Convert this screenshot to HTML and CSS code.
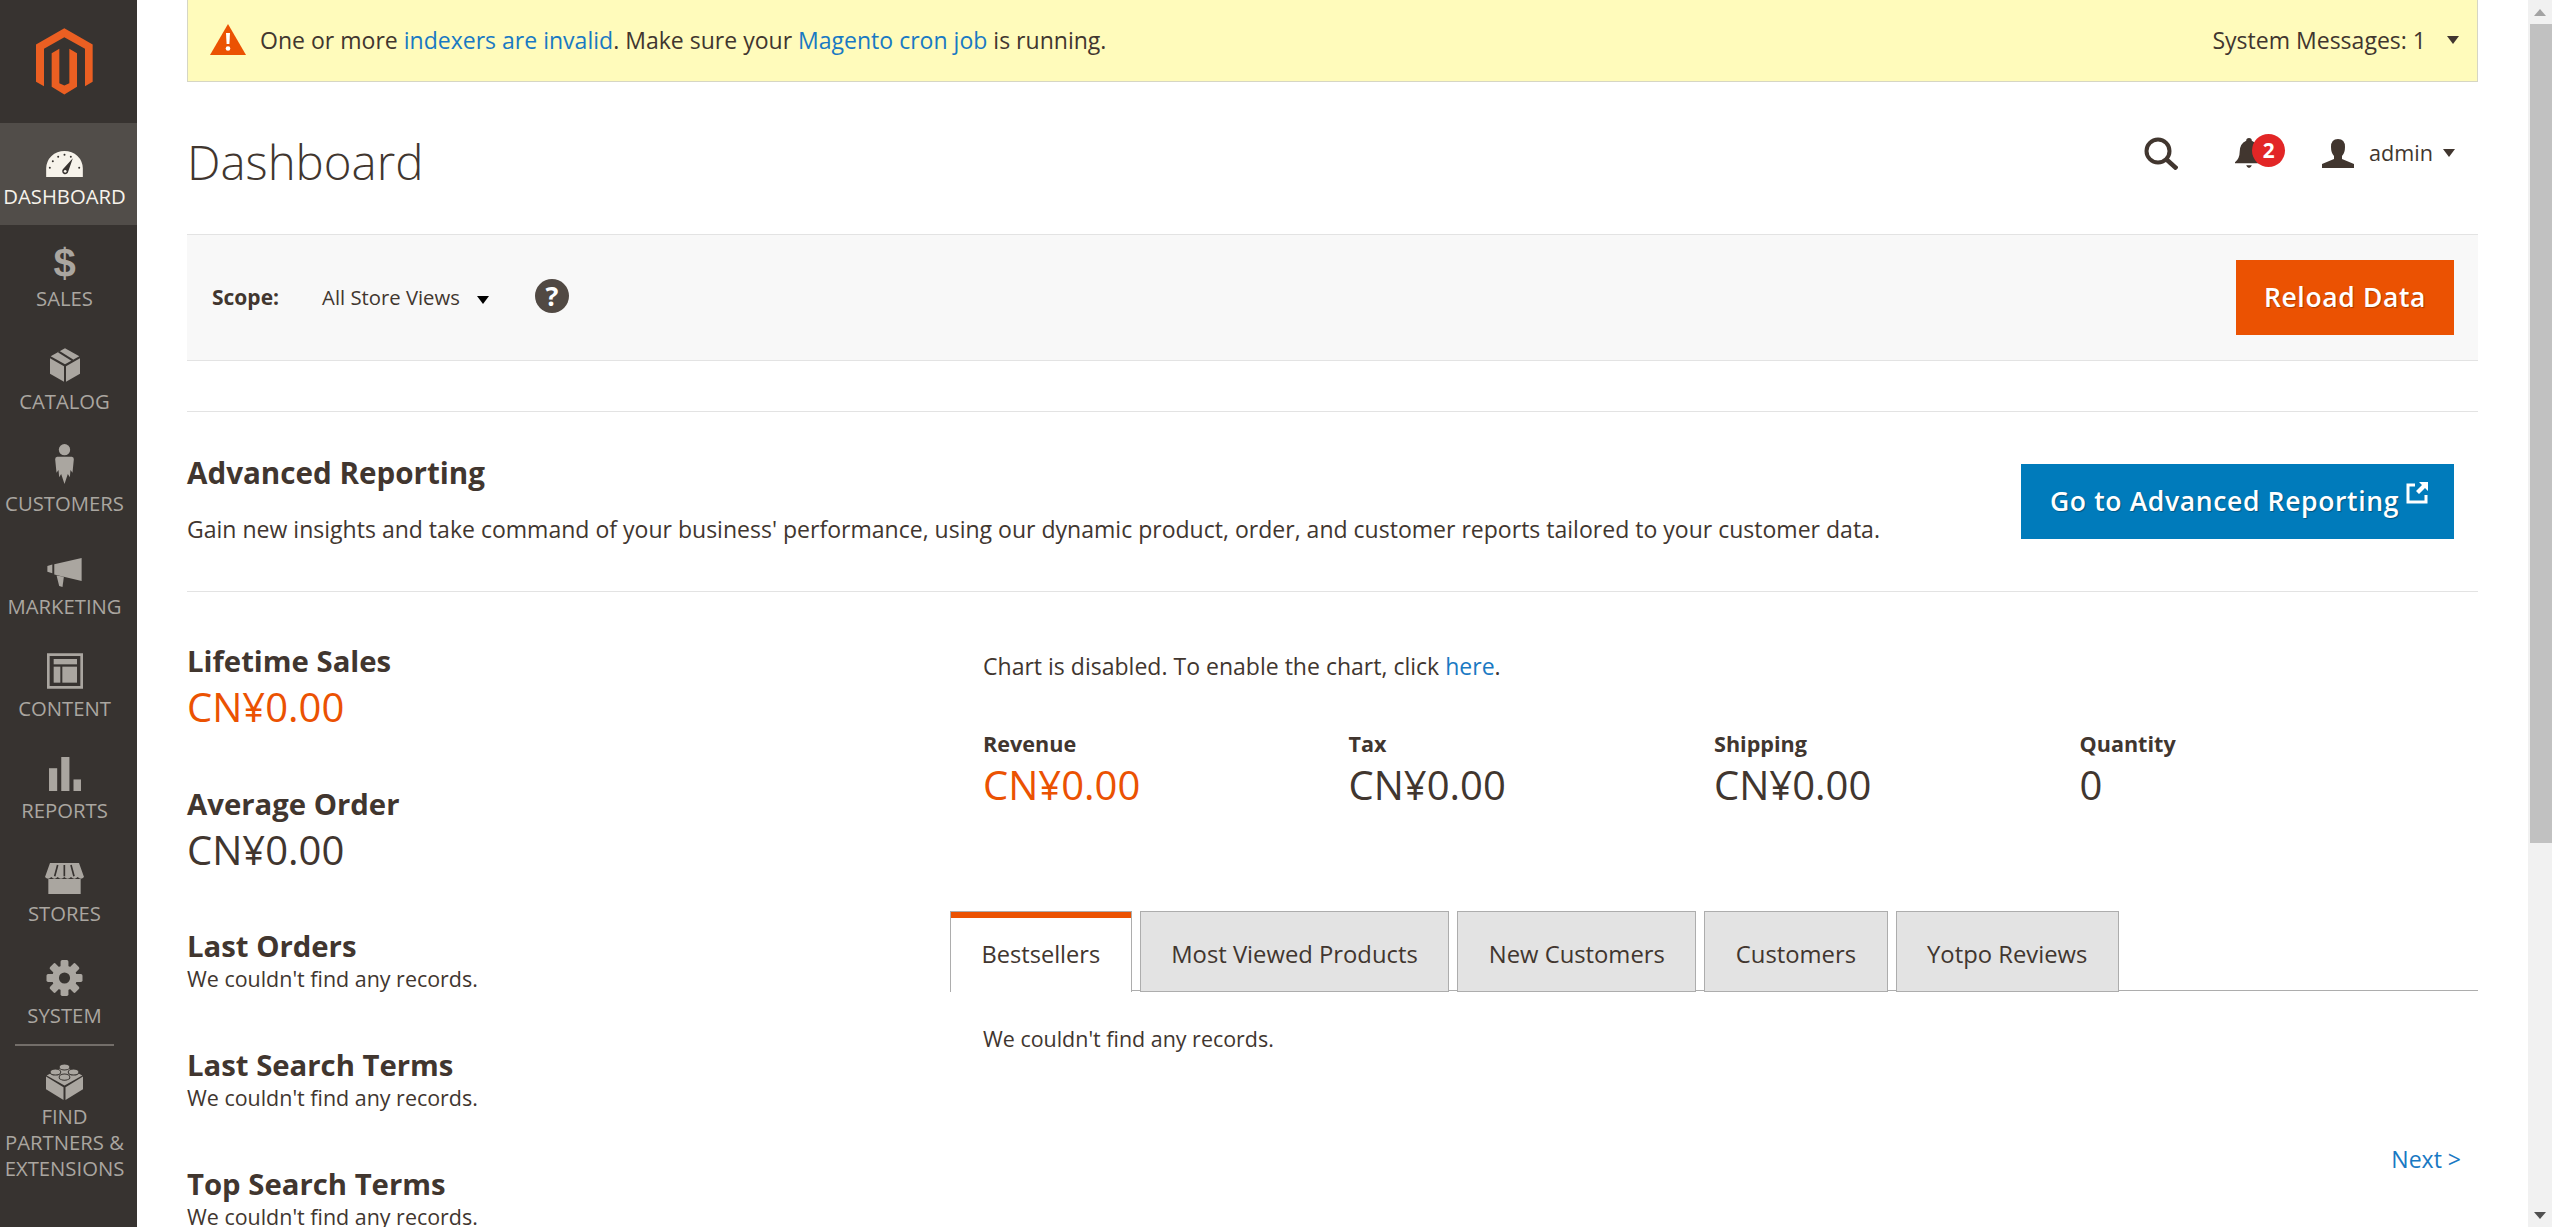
FILE: index.html
```html
<!DOCTYPE html>
<html>
<head>
  <meta charset="utf-8">
  <title>Dashboard / Magento Admin</title>
  <link rel="stylesheet" href="styles.css">
</head>
<body>
<div class="app">

  <nav class="sidebar">
    <div class="logo">
      <svg width="57" height="67" viewBox="0 0 171 200"><path fill="#eb5f22" d="M85 0L170 49V161L147 174V62L85 27L24 62V174L0 161V49Z"/><path fill="#eb5f22" d="M47 75L70 62V165L85 172L100 165V62L123 75V176L85 199L47 176Z"/></svg>
    </div>
    <a class="nav-item active">
      <span class="nav-icon">
        <svg width="37" height="26" viewBox="0 0 110 78"><path fill="#f7f3eb" d="M0 78V52A55 52 0 0 1 110 52V78Z"/><g fill="#373330"><circle cx="11" cy="50" r="3"/><circle cx="20" cy="31" r="3"/><circle cx="36" cy="17" r="3"/><circle cx="55" cy="11" r="3"/><circle cx="74" cy="17" r="3"/><circle cx="99" cy="50" r="3"/><path d="M80 22L66 62A9 9 0 1 1 50 55Z"/></g><circle cx="57" cy="61" r="4" fill="#f7f3eb"/></svg>
      </span>
      <span class="nav-label">Dashboard</span>
    </a>
    <a class="nav-item">
      <span class="nav-icon"><span class="dollar">$</span></span>
      <span class="nav-label">Sales</span>
    </a>
    <a class="nav-item">
      <span class="nav-icon">
        <svg width="30" height="34" viewBox="0 0 90 100"><g fill="#aaa6a0"><path d="M0 30L42 54V100L0 76Z"/><path d="M48 54L90 30V76L48 100Z"/><path d="M45 0L88 24L45 48L2 24Z"/></g><path stroke="#373330" stroke-width="6" d="M26 10L68 36"/></svg>
      </span>
      <span class="nav-label">Catalog</span>
    </a>
    <a class="nav-item">
      <span class="nav-icon">
        <svg width="19" height="40" viewBox="0 0 56 120"><g fill="#aaa6a0"><circle cx="28" cy="17" r="17"/><path d="M6 38H50Q56 38 56 46L52 86L46 78L44 100L38 90L28 120L18 90L12 100L10 78L4 86L0 46Q0 38 6 38Z"/></g></svg>
      </span>
      <span class="nav-label">Customers</span>
    </a>
    <a class="nav-item">
      <span class="nav-icon">
        <svg width="35" height="29" viewBox="0 0 104 88"><g fill="#aaa6a0"><path d="M0 24L15 20V46L0 42Z"/><path d="M21 19L104 0V70L21 50Z"/><path d="M28 53L50 57L46 88L36 85Z"/></g></svg>
      </span>
      <span class="nav-label">Marketing</span>
    </a>
    <a class="nav-item">
      <span class="nav-icon">
        <svg width="36" height="36" viewBox="0 0 108 106"><g fill="#aaa6a0"><path fill-rule="evenodd" d="M0 0H108V106H0ZM8 8V98H100V8Z"/><path d="M20 17H90V33H20Z"/><path d="M20 40H40V88H20Z"/><path d="M46 40H90V88H46Z"/></g></svg>
      </span>
      <span class="nav-label">Content</span>
    </a>
    <a class="nav-item">
      <span class="nav-icon">
        <svg width="32" height="34" viewBox="0 0 94 100"><g fill="#aaa6a0"><rect x="0" y="33" width="24" height="67"/><rect x="36" y="0" width="24" height="100"/><rect x="72" y="66" width="22" height="34"/></g></svg>
      </span>
      <span class="nav-label">Reports</span>
    </a>
    <a class="nav-item">
      <span class="nav-icon">
        <svg width="39" height="31" viewBox="0 0 117 93"><g fill="#aaa6a0"><path d="M10 48H107V93H10Z"/><path d="M15 0H102L117 42Q108 52 98 42Q88 52 78 42Q68 52 58 42Q48 52 38 42Q28 52 19 42Q9 52 0 42Z"/></g><g stroke="#373330" stroke-width="5"><path d="M38 6L29 40"/><path d="M58 6V40"/><path d="M78 6L87 40"/></g></svg>
      </span>
      <span class="nav-label">Stores</span>
    </a>
    <a class="nav-item">
      <span class="nav-icon">
        <svg width="37" height="36" viewBox="0 0 110 110"><g fill="#aaa6a0"><circle cx="55" cy="55" r="38"/><rect x="43" y="0" width="24" height="110" rx="5"/><rect x="43" y="0" width="24" height="110" rx="5" transform="rotate(45 55 55)"/><rect x="43" y="0" width="24" height="110" rx="5" transform="rotate(90 55 55)"/><rect x="43" y="0" width="24" height="110" rx="5" transform="rotate(135 55 55)"/></g><circle cx="55" cy="55" r="17" fill="#373330"/></svg>
      </span>
      <span class="nav-label">System</span>
    </a>
    <a class="nav-item extensions">
      <span class="nav-sep"></span>
      <span class="nav-icon">
        <svg width="37" height="37" viewBox="0 0 110 110"><g fill="#aaa6a0"><path d="M0 40L52 72V110L0 78Z"/><path d="M110 40L58 72V110L110 78Z"/><path d="M55 8L108 37L55 67L2 37Z"/></g><g fill="#aaa6a0" stroke="#373330" stroke-width="3"><ellipse cx="55" cy="12" rx="16" ry="9"/><ellipse cx="28" cy="27" rx="16" ry="9"/><ellipse cx="82" cy="27" rx="16" ry="9"/><ellipse cx="55" cy="42" rx="16" ry="9"/></g></svg>
      </span>
      <span class="nav-label">Find Partners &amp; Extensions</span>
    </a>
  </nav>

  <main class="main">
    <div class="sys-msg">
      <div class="sys-msg-text">
        <svg width="36" height="31" viewBox="0 0 36 31"><path fill="#eb5202" d="M18 0L36 31H0Z"/><path fill="#fff" d="M16 9H20L19.4 20H16.6Z"/><circle cx="18" cy="24.5" r="2.3" fill="#fff"/></svg>
        <span>One or more <a class="link">indexers are invalid</a>. Make sure your <a class="link">Magento cron job</a> is running.</span>
      </div>
      <div class="sys-msg-count">
        <span>System Messages: 1</span>
        <span class="caret"></span>
      </div>
    </div>

    <header class="page-head">
      <h1 class="page-title">Dashboard</h1>
      <div class="head-actions">
        <svg class="ico-search" width="34" height="33" viewBox="0 0 34 33"><circle cx="14" cy="14" r="11.5" fill="none" stroke="#41362f" stroke-width="4"/><path stroke="#41362f" stroke-width="4.5" d="M22 22L33 32"/></svg>
        <div class="bell">
          <svg width="28" height="30" viewBox="0 0 30 32"><path fill="#41362f" d="M12 3Q12 0 15 0Q18 0 18 3Q25 6 25 15Q25 22 30 26V27H0V26Q5 22 5 15Q5 6 12 3Z"/><path fill="#41362f" d="M12 29H18Q17 32 15 32Q13 32 12 29Z"/></svg>
          <span class="badge">2</span>
        </div>
        <svg class="ico-user" width="32" height="29" viewBox="0 0 32 29"><path fill="#41362f" d="M16 0Q23 0 23 8Q23 14 20 17V20L32 25V29H0V25L12 20V17Q9 14 9 8Q9 0 16 0Z"/></svg>
        <span class="admin-name">admin</span>
        <span class="caret small"></span>
      </div>
    </header>

    <div class="scope-bar">
      <div class="scope-left">
        <span class="scope-label">Scope:</span>
        <span class="scope-value">All Store Views</span>
        <span class="caret black"></span>
        <span class="help">?</span>
      </div>
      <a class="btn btn-orange">Reload Data</a>
    </div>

    <section class="adv-report">
      <div class="adv-copy">
        <h2 class="adv-title">Advanced Reporting</h2>
        <p class="adv-text">Gain new insights and take command of your business' performance, using our dynamic product, order, and customer reports tailored to your customer data.</p>
      </div>
      <a class="btn btn-blue">Go to Advanced Reporting
        <svg class="ico-ext" width="22" height="22" viewBox="0 0 22 22"><path fill="none" stroke="#fff" stroke-width="3" d="M9 3H2V20H20V13"/><path fill="#fff" d="M13 0H22V9L19 6L13 12L10 9L16 3Z"/></svg>
      </a>
    </section>

    <div class="dash">
      <aside class="dash-left">
        <h3 class="stat-title first">Lifetime Sales</h3>
        <div class="amount orange">CN¥0.00</div>
        <h3 class="stat-title second">Average Order</h3>
        <div class="amount">CN¥0.00</div>
        <h3 class="stat-title list-head first-list">Last Orders</h3>
        <p class="empty">We couldn't find any records.</p>
        <h3 class="stat-title list-head">Last Search Terms</h3>
        <p class="empty">We couldn't find any records.</p>
        <h3 class="stat-title list-head">Top Search Terms</h3>
        <p class="empty">We couldn't find any records.</p>
      </aside>

      <div class="dash-right">
        <p class="chart-note">Chart is disabled. To enable the chart, click <a class="link">here</a>.</p>
        <div class="totals">
          <div><div class="total-label">Revenue</div><div class="amount orange">CN¥0.00</div></div>
          <div><div class="total-label">Tax</div><div class="amount">CN¥0.00</div></div>
          <div><div class="total-label">Shipping</div><div class="amount">CN¥0.00</div></div>
          <div><div class="total-label">Quantity</div><div class="amount">0</div></div>
        </div>
        <div class="tabs">
          <a class="tab current">Bestsellers</a>
          <a class="tab">Most Viewed Products</a>
          <a class="tab">New Customers</a>
          <a class="tab">Customers</a>
          <a class="tab">Yotpo Reviews</a>
        </div>
        <p class="tab-body">We couldn't find any records.</p>
        <div class="pager"><a class="link">Next &gt;</a></div>
      </div>
    </div>
  </main>

  <div class="scrollbar">
    <span class="sb-btn"><span class="sb-up"></span></span>
    <span class="sb-thumb"></span>
    <span class="sb-btn bottom"><span class="sb-down"></span></span>
  </div>

</div>
</body>
</html>
```

FILE: styles.css
```css
* { box-sizing: border-box; }
html, body { margin: 0; height: 100%; overflow: hidden; }
body { font-family: "Open Sans", sans-serif; font-size: 23.04px; line-height: 32px; color: #41362f; background: #fff; }
h1, h2, h3, p { margin: 0; }
.link { color: #1979c3; }

.app { display: flex; height: 100vh; }

/* sidebar */
.sidebar { flex: 0 0 137px; background: #373330; color: #aaa6a0; padding-right: 8px; }
.logo { height: 123px; display: flex; justify-content: center; padding-top: 28px; }
.logo svg { display: block; }
.nav-item { display: block; height: 102.4px; padding-top: 14px; text-align: center; }
.nav-item.active { background: #514d49; color: #f7f3eb; margin-right: -8px; padding-right: 8px; }
.nav-icon { display: flex; height: 40px; align-items: flex-end; justify-content: center; }
.nav-icon svg { display: block; }
.nav-label { display: block; margin-top: 4px; font-size: 20.3px; line-height: 30px; text-transform: uppercase; white-space: nowrap; }
.dollar { font-family: "Liberation Sans", sans-serif; font-weight: bold; font-size: 40px; line-height: 40px; margin-bottom: -4px; }
.extensions { height: auto; padding-top: 0; }
.nav-sep { display: block; height: 2px; margin: -1px 15px 17px; background: #736e69; }
.extensions .nav-icon { height: 37px; }
.extensions .nav-label { white-space: normal; line-height: 26px; margin-top: 3px; }

/* main column */
.main { flex: 1; min-width: 0; padding: 0 50px; overflow: hidden; }

.sys-msg { height: 82px; display: flex; align-items: center; justify-content: space-between; padding: 0 18px 2px 22px; background: #fffbbb; border: 1px solid #d6d6c4; border-top: 0; }
.sys-msg-text { display: flex; align-items: center; gap: 14px; }
.sys-msg-count { display: flex; align-items: center; gap: 21px; }

.caret { display: block; width: 0; height: 0; border-style: solid; border-width: 8px 6.5px 0; border-color: #41362f transparent transparent; }
.caret.black { border-top-color: #000; margin: 4px 0 0 17px; }

.page-head { height: 152px; display: flex; align-items: center; justify-content: space-between; padding-top: 8px; }
.page-title { font-size: 47.4px; font-weight: 300; line-height: 56px; }
.head-actions { display: flex; align-items: center; padding-right: 23px; margin-top: -18px; }
.ico-search { margin-right: 57px; }
.bell { position: relative; width: 50px; height: 30px; margin-right: 37px; }
.bell svg { display: block; }
.badge { position: absolute; top: -4px; right: 0; width: 33px; height: 33px; border-radius: 50%; background: #e22626; color: #fff; font-size: 20.8px; font-weight: 700; line-height: 33px; text-align: center; }
.admin-name { margin: 0 10px 0 15px; font-size: 21.6px; line-height: 30px; }

.scope-bar { height: 127px; display: flex; align-items: center; justify-content: space-between; padding: 0 24px 0 25px; background: #f8f8f8; border-top: 1px solid #e3e3e3; border-bottom: 1px solid #e3e3e3; }
.scope-left { display: flex; align-items: center; }
.scope-label { margin: -2px 43px 0 0; font-size: 21px; font-weight: 700; }
.scope-value { margin-top: -2px; font-size: 20.3px; }
.help { width: 34px; height: 34px; margin: -4px 0 0 46px; border-radius: 50%; background: #514943; color: #fff; font-size: 27px; font-weight: 700; line-height: 34px; text-align: center; }

.btn { display: block; height: 75px; font-size: 26.5px; font-weight: 600; letter-spacing: .64px; line-height: 75px; color: #fff; text-shadow: 1px 1px 1px rgba(0, 0, 0, .3); white-space: nowrap; }
.btn-orange { width: 218px; background: #eb5202; text-align: center; }
.btn-blue { position: relative; width: 433px; padding-left: 29px; background: #007bbb; }
.ico-ext { position: absolute; top: 18px; left: 385px; }

.adv-report { height: 181px; margin-top: 50px; padding-right: 24px; display: flex; align-items: center; justify-content: space-between; border-top: 1px solid #e3e3e3; border-bottom: 1px solid #e3e3e3; }
.adv-copy { padding-bottom: 5px; }
.adv-title { font-size: 29.6px; font-weight: 700; line-height: 40px; }
.adv-text { margin-top: 20px; }

/* dashboard body */
.dash { display: flex; }
.dash-left { flex: 0 0 763px; }
.dash-right { flex: 1; min-width: 0; }

.stat-title { font-size: 29.3px; font-weight: 700; line-height: 40px; }
.stat-title.first { margin-top: 49px; }
.stat-title.second { margin-top: 54px; }
.amount { margin-top: 3px; font-size: 40px; line-height: 46px; }
.amount.orange { color: #eb5202; }
.list-head { margin-top: 55px; }
.list-head.first-list { margin-top: 53px; }
.empty { margin-top: 2px; font-size: 21.44px; line-height: 22px; }

.chart-note { margin: 58px 0 0 33px; }
.totals { display: grid; grid-template-columns: repeat(4, 365.5px); margin: 47px 0 0 33px; }
.total-label { font-size: 21.6px; font-weight: 700; line-height: 30px; }

.tabs { display: flex; gap: 8px; height: 80px; margin-top: 103px; border-bottom: 1px solid #adadad; }
.tab { height: 81px; padding: 0 30.5px; font-size: 23.8px; line-height: 84px; background: #e3e3e3; border: 1px solid #adadad; white-space: nowrap; }
.tab.current { background: #fff; border-bottom: 0; box-shadow: inset 0 6px 0 #eb5202; font-size: 23.6px; font-weight: 500; }

.tab-body { margin: 32px 0 0 33px; font-size: 21.44px; }
.pager { margin-top: 88px; padding-right: 17px; text-align: right; }

/* scrollbar */
.scrollbar { flex: 0 0 24px; display: flex; flex-direction: column; background: #f1f1f1; }
.sb-btn { display: flex; height: 24px; align-items: center; justify-content: center; }
.sb-btn.bottom { margin-top: auto; }
.sb-up, .sb-down { width: 0; height: 0; border-style: solid; border-color: transparent; }
.sb-up { border-width: 0 6px 7px; border-bottom-color: #a3a3a3; }
.sb-down { border-width: 7px 6px 0; border-top-color: #505050; }
.sb-thumb { display: block; height: 819px; margin-left: 2px; background: #c1c1c1; }
```
